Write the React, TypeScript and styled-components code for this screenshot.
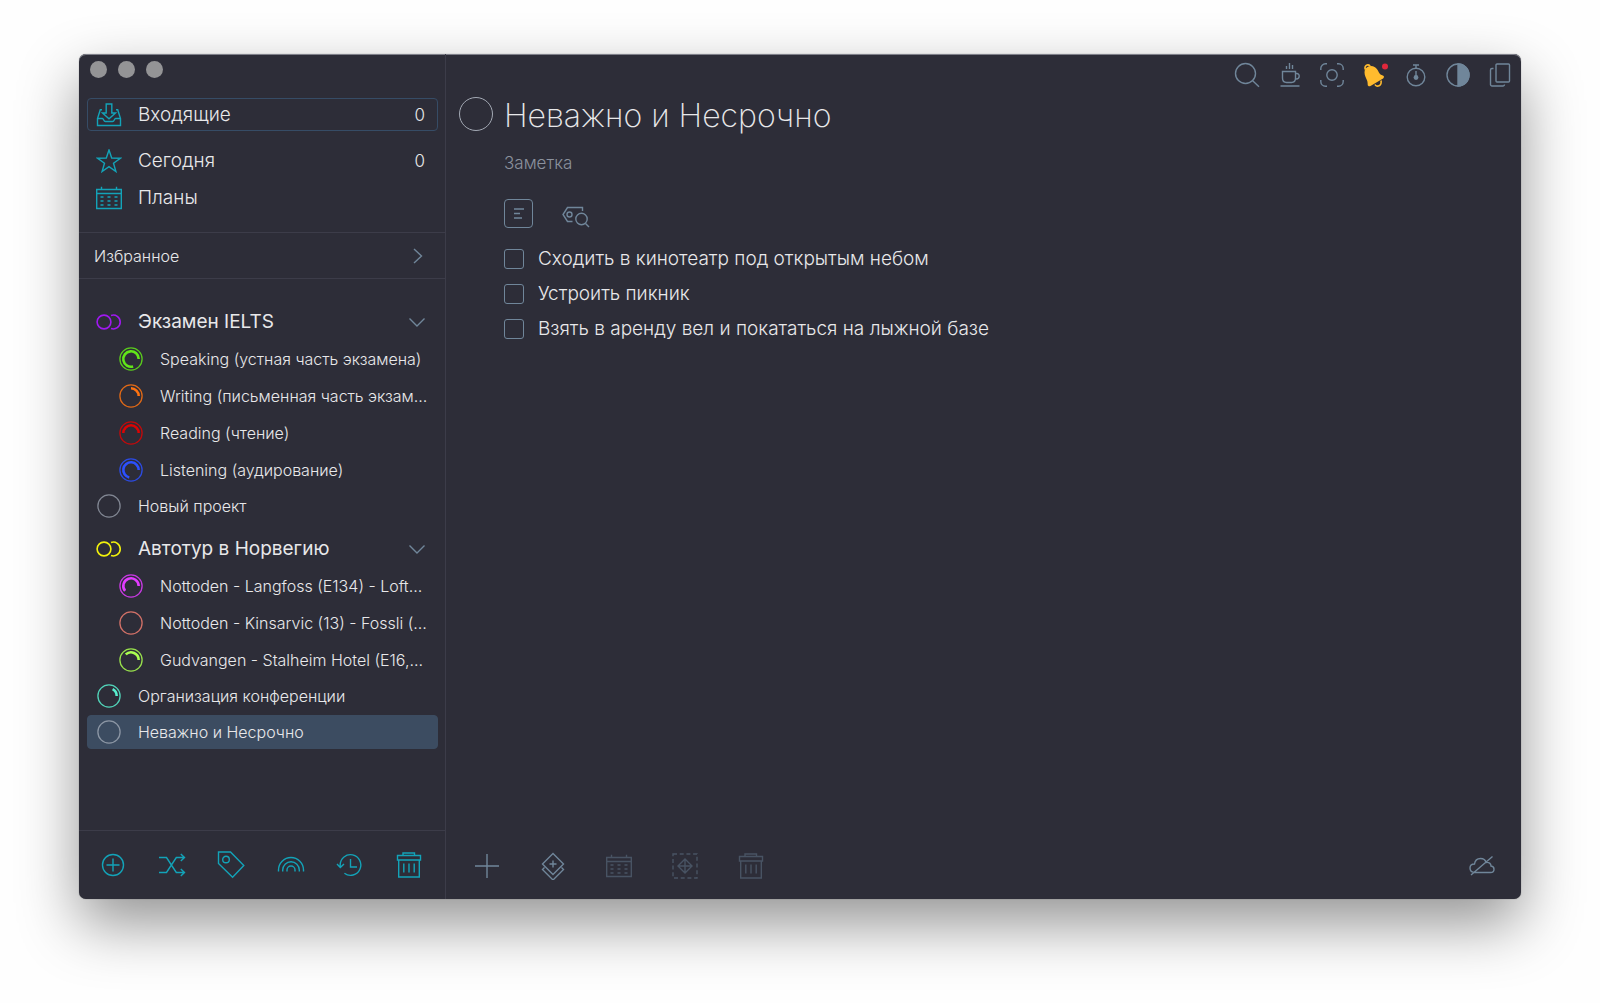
import React from "react";
import styled, { createGlobalStyle, css } from "styled-components";

const color = {
  window: "#2d2d38",
  line: "#3c3c49",
  text: "#e8e8ea",
  teal: "#13a3b8",
  slate: "#70869a",
  dim: "#485363",
  muted: "#8b919d",
  selected: "#3c4c61",
  outline: "#364c66",
};

const GlobalStyle = createGlobalStyle`
  *, *::before, *::after { box-sizing: border-box; }
  body {
    margin: 0;
    background: #fefefe;
    color: ${color.text};
    font-family: Inter, "Liberation Sans", sans-serif;
    font-weight: 300;
    -webkit-font-smoothing: antialiased;
  }
  h1, h2, ul, p { margin: 0; padding: 0; font-weight: inherit; }
  ul { list-style: none; }
  button, input { font: inherit; color: inherit; }
`;

const Desktop = styled.div`
  display: flex;
  min-height: 100vh;
  padding: 54px 79px 104px;
`;

const Window = styled.div`
  flex: 1;
  display: flex;
  min-width: 0;
  background: ${color.window};
  border-radius: 7px;
  box-shadow: inset 0 1px 0 #7f808a, 0 0 1px rgba(0, 0, 0, 0.5),
    0 25px 60px rgba(0, 0, 0, 0.42);
`;

const Sidebar = styled.aside`
  display: flex;
  flex-direction: column;
  flex: none;
  width: 367px;
  border-right: 1px solid ${color.line};
`;

const Lights = styled.div`
  display: flex;
  gap: 11px;
  padding: 7px 11px 0;
  height: 44px;
`;

const Light = styled.button`
  width: 17px;
  height: 17px;
  padding: 0;
  border: 0;
  border-radius: 50%;
  background: #949496;
`;

const Nav = styled.nav`
  display: flex;
  flex-direction: column;
  gap: 4px;
  padding: 0 7px 18px 8px;
`;

const RowButton = styled.button<{ $level?: number; $selected?: boolean; $outlined?: boolean }>`
  display: flex;
  align-items: center;
  gap: 16px;
  width: 100%;
  height: 33px;
  padding: 0 12px 0 ${(p) => (p.$level ? 30 : 8)}px;
  border: 1px solid ${(p) => (p.$outlined ? color.outline : "transparent")};
  border-radius: 4px;
  background: ${(p) => (p.$selected ? color.selected : "transparent")};
  background-clip: border-box;
  text-align: left;
  white-space: nowrap;
  cursor: pointer;
`;

const NavButton = styled(RowButton)`
  font-size: 19px;
  line-height: 24px;

  &:first-child {
    margin-bottom: 9px;
  }
`;

const ItemButton = styled(RowButton)`
  height: 34px;
  padding-right: 2px;
  border-color: ${(p) => (p.$selected ? color.selected : "transparent")};
  font-size: 16px;
  line-height: 22px;
`;

const RowLabel = styled.span`
  flex: 1;
  min-width: 0;
  overflow: hidden;
  text-overflow: ellipsis;
`;

const Count = styled.span`
  font-size: 17px;
`;

const Slot = styled.span`
  display: flex;
  justify-content: center;
  flex: none;
  width: 26px;
`;

const Favorites = styled.button`
  display: flex;
  align-items: center;
  justify-content: space-between;
  height: 47px;
  padding: 0 22px 0 15px;
  border: solid ${color.line};
  border-width: 1px 0;
  background: none;
  font-size: 16px;
  text-align: left;
  cursor: pointer;
`;

const Projects = styled.div`
  flex: 1;
  padding: 25px 7px 0 8px;
`;

const Group = styled.section`
  margin-bottom: 7px;
`;

const GroupHeader = styled(RowButton)`
  height: 36px;
  font-size: 19px;
  font-weight: 400;
  line-height: 24px;
`;

const Item = styled.li<{ $nested?: boolean }>`
  display: flex;
  align-items: center;
  height: ${(p) => (p.$nested ? 37 : 36)}px;
`;

const SidebarTools = styled.footer`
  display: flex;
  align-items: center;
  justify-content: space-between;
  height: 69px;
  padding: 0 21px 0 19px;
  border-top: 1px solid ${color.line};
`;

const ToolButton = styled.button<{ $tone?: "teal" | "slate" | "dim" }>`
  display: grid;
  place-items: center;
  width: 30px;
  height: 30px;
  padding: 0;
  border: 0;
  background: none;
  color: ${(p) => color[p.$tone ?? "slate"]};
  cursor: pointer;
`;

const Main = styled.main`
  flex: 1;
  display: flex;
  flex-direction: column;
  min-width: 0;
`;

const TopBar = styled.header`
  display: flex;
  justify-content: flex-end;
  gap: 12px;
  padding: 6px 6px 0;
`;

const TitleRow = styled.div`
  display: flex;
  align-items: center;
  gap: 11px;
  height: 48px;
  padding-left: 13px;
`;

const RoundCheck = styled.input`
  appearance: none;
  width: 34px;
  height: 34px;
  margin: 0;
  border: 1px solid #a3a9b4;
  border-radius: 50%;
`;

const Title = styled.h1`
  padding-top: 4px;
  font-size: 32px;
  line-height: 44px;
  font-weight: 200;
`;

const Body = styled.div`
  flex: 1;
  padding: 13px 58px 0;
`;

const Note = styled.input`
  display: block;
  width: 100%;
  height: 24px;
  padding: 0;
  border: 0;
  outline: 0;
  background: none;
  font-size: 17px;

  &::placeholder {
    color: ${color.muted};
    opacity: 1;
  }
`;

const Modes = styled.div`
  display: flex;
  align-items: center;
  gap: 28px;
  margin: 24px 0 13px;
`;

const ModeButton = styled(ToolButton)<{ $framed?: boolean }>`
  width: 29px;
  height: 29px;
  ${(p) =>
    p.$framed &&
    css`
      border: 1px solid ${color.slate};
      border-radius: 4px;
    `}
`;

const Task = styled.li`
  display: flex;
  height: 35px;
`;

const TaskLabel = styled.label`
  display: flex;
  align-items: center;
  gap: 14px;
  font-size: 19px;
  line-height: 24px;
`;

const Check = styled.input`
  appearance: none;
  width: 20px;
  height: 20px;
  margin: 0;
  border: 1px solid ${color.slate};
  border-radius: 3px;
`;

const BottomBar = styled.footer`
  display: flex;
  align-items: center;
  gap: 36px;
  height: 66px;
  padding: 0 24px 0 26px;
`;

const Spacer = styled.span`
  flex: 1;
`;

const Drawing = styled.svg`
  display: block;
  flex: none;
  fill: none;
  stroke: currentColor;
  stroke-width: 1.4;
`;

type IconProps = { w?: number; h?: number; tint?: string; children: React.ReactNode };
const Icon = ({ w = 28, h = w, tint, children }: IconProps) => (
  <Drawing width={w} height={h} viewBox={`0 0 ${w} ${h}`} color={tint} aria-hidden="true">
    {children}
  </Drawing>
);

const InboxIcon = () => (
  <Icon w={26} h={24} tint={color.teal}>
    <path d="M10.200 1h5.600v9h3.700L13 15.800l-6.500-5.800h3.700z" />
    <path d="M6 6.700H4.300L1.500 15.500v7h23v-7L21.700 6.700H20M1.500 15.500H6.500c1.200 0 1 3 3 3h7c2 0 1.800-3 3-3h5" />
  </Icon>
);
const StarIcon = () => (
  <Icon w={26} h={24} tint={color.teal}>
    <path d="M13 1l2.700 8 8.700.2-6.900 5.100 2.400 8.200L13 17.700 6.100 22.500l2.400-8.200L1.600 9.200l8.700-.2z" />
  </Icon>
);
const CalendarIcon = ({ tint }: { tint?: string }) => (
  <Icon w={26} h={24} tint={tint}>
    <path d="M.7 3.500h24.600v19H.7zM.7 7.500h24.600M5.500 .7v2.800M20.500 .7v2.800" />
    <path strokeDasharray="3 4" d="M4.500 11h18M4.500 15h18M4.500 19h18" />
  </Icon>
);
const LinkedRings = ({ tint }: { tint: string }) => (
  <Icon w={26} h={16} tint={tint}>
    <circle cx="8" cy="8" r="6.900" strokeWidth="1.600" />
    <path strokeWidth="1.600" d="M15 1.500a6.900 6.900 0 1 1 0 13" />
  </Icon>
);
const Progress = ({ tint, sweep }: { tint: string; sweep: number }) => {
  const a = (sweep * Math.PI) / 180;
  return (
    <Icon w={24} tint={tint}>
      <circle cx="12" cy="12" r="11.100" strokeWidth="1.300" opacity={0.85} />
      {sweep > 0 && (
        <path
          strokeWidth="2.600"
          d={`M19.700 12A7.700 7.700 0 ${sweep > 180 ? 1 : 0} 0 ${12 + 7.7 * Math.cos(a)} ${12 - 7.7 * Math.sin(a)}`}
        />
      )}
    </Icon>
  );
};
const ChevronRight = () => (
  <Icon w={10} h={16} tint={color.slate}>
    <path d="M1 1l7.500 7L1 15" />
  </Icon>
);
const ChevronDown = () => (
  <Icon w={16} h={9} tint={color.slate}>
    <path d="M.5 .5l7.500 7.500 7.500-7.500" />
  </Icon>
);
const TrashIcon = () => (
  <Icon>
    <path d="M2.500 4.500h23v4.500h-23zM8 4.500v-2.500h11.500v2.500M3.700 9v17h20.600V9M8.800 12.500v9M14 12.500v9M19.200 12.500v9" />
  </Icon>
);

const sidebarTools = [
  { label: "Добавить", icon: <Icon><circle cx="14" cy="14" r="10.500" /><path d="M14 7.500v13M7.500 14h13" /></Icon> },
  { label: "Перемешать", icon: <Icon><path d="M1 6.500h7.500l9.800 15h8M1 21.500h7.500l9.800-15h8M22.800 3l3.700 3.500L22.800 10M22.800 18l3.700 3.500-3.700 3.500" /></Icon> },
  { label: "Метки", icon: <Icon><path d="M1.500 1h12l13.300 13.600-11.200 11.700L1.500 12.500z" /><circle cx="9" cy="8.500" r="3.300" /></Icon> },
  { label: "Области", icon: <Icon><path d="M1.500 20.500v-1.500a12.500 12.500 0 0 1 25 0v1.500M5.700 20.500v-1.500a8.300 8.300 0 0 1 16.600 0v1.500M10 20.500v-1.500a4 4 0 0 1 8 0v1.500" /></Icon> },
  { label: "История", icon: <Icon><path d="M4.200 16V14a10.300 10.300 0 1 1 4.200 8.300M1 13l3.300 3.500L8 13M14.500 8v8h6.500" /></Icon> },
  { label: "Корзина", icon: <TrashIcon /> },
];

const topTools = [
  { label: "Поиск", icon: <Icon><circle cx="11.500" cy="12.500" r="10" /><path d="M18.700 19.700l6.300 6" /></Icon> },
  { label: "Перерыв", icon: <Icon><path d="M6.500 10.500h13v6.500c0 3-1.500 4.500-4 4.500h-5c-2.500 0-4-1.500-4-4.500zM19.500 12.500h1.300c3.300 0 3.300 5.500-.5 5.500h-1M4.500 25h19M13.500 2v6M10.500 5v3M16.500 4v4" /></Icon> },
  { label: "Фокус", icon: <Icon><circle cx="14" cy="14" r="5.200" /><path d="M2.800 9V7.500a4.700 4.700 0 0 1 4.700-4.700H9M19 2.800h1.500a4.700 4.700 0 0 1 4.700 4.700V9M25.200 19v1.500a4.700 4.700 0 0 1-4.700 4.700H19M9 25.200H7.500a4.700 4.700 0 0 1-4.700-4.700V19" /></Icon> },
  {
    label: "Уведомления",
    icon: (
      <Icon tint="#ffbb2e">
        <path fill="currentColor" stroke="none" d="M4.800 9C6 5.500 11 3.500 15 6.200c3.500 2.400 3.500 5.800 5.500 7.200l2.800 1.400c1 .6.800 2-.2 2.700L10.500 25c-1.300.7-2.700.2-2.800-1.200 0-2.800-.5-4.300-1.500-6.300C5 15 4 12 4.800 9z" />
        <path strokeWidth="1.600" d="M5.300 8.500C4 5 7.500 2.300 10.200 5M15 23.500c1.500 3.200 7.200 1.500 6-4" />
        <circle cx="25" cy="5.500" r="3" fill="#e0283c" stroke="none" />
      </Icon>
    ),
  },
  { label: "Таймер", icon: <Icon><circle cx="14" cy="16" r="8.800" /><path d="M14 7V4M11 4h6M14 10v6" /><circle cx="14" cy="16.500" r="2.400" fill="currentColor" stroke="none" /></Icon> },
  { label: "Тема", icon: <Icon><circle cx="14" cy="14" r="11" /><path fill="currentColor" d="M14 3a11 11 0 0 1 0 22z" /></Icon> },
  { label: "Новое окно", icon: <Icon><rect x="10" y="3" width="13.500" height="18" rx="1" /><path d="M7.500 7.500H6a1.500 1.500 0 0 0-1.500 1.500v14.500A1.500 1.500 0 0 0 6 25h11a1.500 1.500 0 0 0 1.500-1.500" /></Icon> },
];

const mainTools = [
  { label: "Новая задача", icon: <Icon><path d="M14 2v24M2 14h24" /></Icon> },
  { label: "Новая группа", icon: <Icon><path d="M14 1.500L24.500 12 14 22.500 3.500 12zM5.500 15.500l-2 2L14 28l10.500-10.500-2-2M14 8.500v7M10.500 12h7" /></Icon> },
  { label: "Дата", dim: true, icon: <CalendarIcon /> },
  { label: "Переместить", dim: true, icon: <Icon><rect x="2" y="2" width="24" height="24" strokeDasharray="4 2.700" /><path d="M14 7l7 7-7 7-7-7zM14 7v14M7 14h14" /></Icon> },
  { label: "Удалить", dim: true, icon: <TrashIcon /> },
];

type Project = { name: string; tint: string; sweep: number };
const groups: { name: string; tint: string; nested: Project[]; after: Project[] }[] = [
  {
    name: "Экзамен IELTS",
    tint: "#a019f0",
    nested: [
      { name: "Speaking (устная часть экзамена)", tint: "#62e619", sweep: 286 },
      { name: "Writing (письменная часть экзам…", tint: "#ff7310", sweep: 90 },
      { name: "Reading (чтение)", tint: "#dc0404", sweep: 180 },
      { name: "Listening (аудирование)", tint: "#2c50ff", sweep: 257 },
    ],
    after: [{ name: "Новый проект", tint: "#9097a3", sweep: 0 }],
  },
  {
    name: "Автотур в Норвегию",
    tint: "#f2f20c",
    nested: [
      { name: "Nottoden - Langfoss (E134) - Loft…", tint: "#e23cff", sweep: 220 },
      { name: "Nottoden - Kinsarvic (13) - Fossli (…", tint: "#ef7d70", sweep: 0 },
      { name: "Gudvangen - Stalheim Hotel (E16,…", tint: "#aaff50", sweep: 133 },
    ],
    after: [
      { name: "Организация конференции", tint: "#58f0cf", sweep: 62 },
      { name: "Неважно и Несрочно", tint: "#9aa3b0", sweep: 0 },
    ],
  },
];
const current = "Неважно и Несрочно";

const tasks = [
  "Сходить в кинотеатр под открытым небом",
  "Устроить пикник",
  "Взять в аренду вел и покататься на лыжной базе",
];

const ProjectRow = ({ project, nested }: { project: Project; nested?: boolean }) => (
  <Item $nested={nested}>
    <ItemButton $level={nested ? 1 : 0} $selected={project.name === current}>
      <Slot>
        <Progress tint={project.tint} sweep={project.sweep} />
      </Slot>
      <RowLabel>{project.name}</RowLabel>
    </ItemButton>
  </Item>
);

export default function App() {
  return (
    <Desktop>
      <GlobalStyle />
      <Window>
        <Sidebar>
          <Lights>
            <Light aria-label="Закрыть" />
            <Light aria-label="Свернуть" />
            <Light aria-label="Развернуть" />
          </Lights>
          <Nav>
            <NavButton $outlined>
              <Slot><InboxIcon /></Slot>
              <RowLabel>Входящие</RowLabel>
              <Count>0</Count>
            </NavButton>
            <NavButton>
              <Slot><StarIcon /></Slot>
              <RowLabel>Сегодня</RowLabel>
              <Count>0</Count>
            </NavButton>
            <NavButton>
              <Slot><CalendarIcon tint={color.teal} /></Slot>
              <RowLabel>Планы</RowLabel>
            </NavButton>
          </Nav>
          <Favorites>
            Избранное
            <ChevronRight />
          </Favorites>
          <Projects>
            {groups.map((group) => (
              <Group key={group.name}>
                <GroupHeader>
                  <Slot><LinkedRings tint={group.tint} /></Slot>
                  <RowLabel>{group.name}</RowLabel>
                  <ChevronDown />
                </GroupHeader>
                <ul>
                  {group.nested.map((p) => <ProjectRow key={p.name} project={p} nested />)}
                  {group.after.map((p) => <ProjectRow key={p.name} project={p} />)}
                </ul>
              </Group>
            ))}
          </Projects>
          <SidebarTools>
            {sidebarTools.map((t) => (
              <ToolButton key={t.label} $tone="teal" aria-label={t.label}>{t.icon}</ToolButton>
            ))}
          </SidebarTools>
        </Sidebar>
        <Main>
          <TopBar>
            {topTools.map((t) => (
              <ToolButton key={t.label} aria-label={t.label}>{t.icon}</ToolButton>
            ))}
          </TopBar>
          <TitleRow>
            <RoundCheck type="checkbox" aria-labelledby="project-title" />
            <Title id="project-title">{current}</Title>
          </TitleRow>
          <Body>
            <Note aria-label="Заметка" placeholder="Заметка" />
            <Modes>
              <ModeButton $framed aria-label="Список">
                <Icon w={27}><path d="M9 9h10M9 13.500h6M9 18h8" /></Icon>
              </ModeButton>
              <ModeButton aria-label="Фильтр по меткам">
                <Icon w={29}>
                  <path d="M11.500 22.500H6.500L2 15.500 6.500 8.500H21.500v3.500" />
                  <circle cx="8.500" cy="15.500" r="2.500" />
                  <circle cx="20.500" cy="20" r="5.700" />
                  <path d="M24.500 24.500l3.500 3.500" />
                </Icon>
              </ModeButton>
            </Modes>
            <ul>
              {tasks.map((task) => (
                <Task key={task}>
                  <TaskLabel>
                    <Check type="checkbox" />
                    {task}
                  </TaskLabel>
                </Task>
              ))}
            </ul>
          </Body>
          <BottomBar>
            {mainTools.map((t) => (
              <ToolButton key={t.label} $tone={t.dim ? "dim" : "slate"} aria-label={t.label}>{t.icon}</ToolButton>
            ))}
            <Spacer />
            <ToolButton aria-label="Синхронизация отключена">
              <Icon>
                <path d="M7 20.500c-3.500 0-5-2-5-4.500s2-4 4.500-4C7 8.500 9.500 6.500 12.500 6.500s5 1.500 5.500 4c3-.5 5 1 5 3.500 2 .2 3 1.500 3 3.200 0 2-1.500 3.300-3.500 3.300zM3 23L24.500 4.500" />
              </Icon>
            </ToolButton>
          </BottomBar>
        </Main>
      </Window>
    </Desktop>
  );
}
